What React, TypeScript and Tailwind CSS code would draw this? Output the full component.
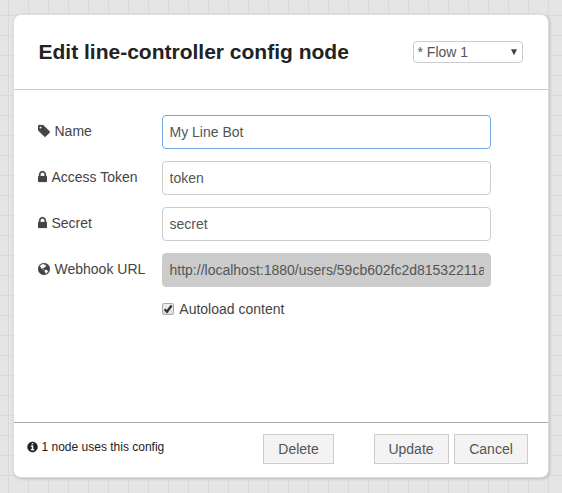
import React from "react";

function Glyph({ d, units, className }: { d: string; units: number; className: string }) {
  return (
    <svg viewBox={`0 0 ${units} 1792`} className={`shrink-0 ${className}`} fill="currentColor" stroke="currentColor" strokeWidth="30" fillRule="evenodd" aria-hidden="true">
      <path d={d} />
    </svg>
  );
}

const TAG =
  "M448 448q0-53-37.5-90.5t-90.5-37.5-90.5 37.5-37.5 90.5 37.5 90.5 90.5 37.5 90.5-37.5 37.5-90.5zm1067 576q0 53-37 90l-491 492q-39 37-91 37-53 0-90-37l-715-716q-38-37-64.5-101t-26.5-117v-416q0-52 38-90t90-38h416q53 0 117 26.5t102 64.5l715 714q37 39 37 91z";
const LOCK =
  "M320 768h512v-192q0-106-75-181t-181-75-181 75-75 181v192zm832 96v576q0 40-28 68t-68 28h-960q-40 0-68-28t-28-68v-576q0-40 28-68t68-28h32v-192q0-184 132-316t316-132 316 132 132 316v192h32q40 0 68 28t28 68z";
const INFO =
  "M1024 1376v-160q0-14-9-23t-23-9h-96v-512q0-14-9-23t-23-9h-320q-14 0-23 9t-9 23v160q0 14 9 23t23 9h96v320h-96q-14 0-23 9t-9 23v160q0 14 9 23t23 9h448q14 0 23-9t9-23zm-128-896v-160q0-14-9-23t-23-9h-192q-14 0-23 9t-9 23v160q0 14 9 23t23 9h192q14 0 23-9t9-23zm640 416q0 209-103 385.5t-279.5 279.5-385.5 103-385.5-103-279.5-279.5-103-385.5 103-385.5 279.5-279.5 385.5-103 385.5 103 279.5 279.5 103 385.5z";
const GLOBE =
  "M768 128a768 768 0 1 0 0 1536a768 768 0 1 0 0-1536z M270 480L400 340L580 250L720 230L820 300L760 380L900 330L1010 400L1080 530L970 590L900 670L810 740L740 820L690 780L600 800L590 880L680 900L710 1000L800 1030L740 1040L620 960L480 880L400 760L330 650L240 620z M880 1010L990 970L1110 1020L1200 1090L1310 1130L1260 1270L1130 1410L960 1490L910 1500L930 1330L830 1200L820 1090z";

function Row({ icon, label, children }: { icon: React.ReactNode; label: string; children: React.ReactNode }) {
  return (
    <div className="flex h-[34px] text-[14px] leading-5">
      <label className="flex w-[124px] shrink-0 items-center gap-[4.5px] pb-[2px] whitespace-nowrap text-[#444]">
        {icon}
        <span>{label}</span>
      </label>
      {children}
    </div>
  );
}

const field = "h-[34px] w-[329px] rounded border px-[6.5px] text-[14px] leading-5 text-[#555] outline-none";
const button = "h-[30px] border border-[#ccc] bg-[#f3f3f3] text-[14px] leading-5 text-[#555]";

export default function App() {
  return (
    <main className="h-[493px] w-[562px] overflow-hidden bg-[#e5e5e5] bg-[linear-gradient(to_right,#d9d9d9_1px,transparent_1px),linear-gradient(to_bottom,#d9d9d9_1px,transparent_1px)] bg-size-[20px_20px] bg-position-[8px_15px] pt-[14px] pl-[13px] font-['Liberation_Sans',Arial,sans-serif]">
      <section className="flex h-[464px] w-[536px] flex-col rounded-[8px] border border-[#ddd] bg-white shadow-[1px_1px_3px_#bbb]">
        <header className="flex h-[75px] items-center justify-between border-b border-[#ccc] pr-[25px] pl-[24.5px]">
          <h1 className="text-[21px] leading-6 font-bold text-[#222]">Edit line-controller config node</h1>
          <button className="flex h-[22px] w-[110px] items-center justify-between rounded border border-[#ccc] bg-white pr-[5px] pl-[3.5px] text-[14px] leading-5 text-[#555]">
            <span>* Flow 1</span>
            <svg viewBox="0 0 6 6" className="mb-px h-[6px] w-[6px]" fill="#444" aria-hidden="true">
              <path d="M0 .3H6L3.2 6H2.8z" />
            </svg>
          </button>
        </header>
        <div className="flex h-[332px] flex-col gap-3 pt-[25px] pl-6">
          <Row label="Name" icon={<Glyph d={TAG} units={1536} className="h-[14px] w-[12px]" />}>
            <input className={`${field} border-[#72a7e6]`} defaultValue="My Line Bot" />
          </Row>
          <Row label="Access Token" icon={<Glyph d={LOCK} units={1152} className="h-[14px] w-[9px]" />}>
            <input className={`${field} border-[#ccc]`} defaultValue="token" />
          </Row>
          <Row label="Secret" icon={<Glyph d={LOCK} units={1152} className="h-[14px] w-[9px]" />}>
            <input className={`${field} border-[#ccc]`} defaultValue="secret" />
          </Row>
          <Row label="Webhook URL" icon={<Glyph d={GLOBE} units={1536} className="h-[14px] w-[12px]" />}>
            <input readOnly className={`${field} border-[#ccc] bg-[#ccc]`} defaultValue="http://localhost:1880/users/59cb602fc2d81532211a" />
          </Row>
          <label className="flex h-5 items-center gap-[5.3px] pl-[124px] text-[14px] leading-5 text-[#444]">
            <span className="flex h-[12px] w-[12px] items-center justify-center rounded-[2px] border border-[#aaa] bg-linear-to-b from-[#eee] to-[#ddd]">
              <svg viewBox="0 0 10 10" className="h-[10px] w-[10px] shrink-0" fill="none" stroke="#333" strokeWidth="2.3" aria-hidden="true">
                <path d="M1.6 5.2L4 7.7L8.6 1.5" />
              </svg>
            </span>
            <span>Autoload content</span>
          </label>
        </div>
        <footer className="flex h-[55px] items-start border-t border-[#aaa] pt-[11px] pr-5 pl-[13px]">
          <div className="flex h-[26px] w-[236px] items-center gap-[3.5px] text-[12px] leading-5 whitespace-nowrap text-[#222]">
            <Glyph d={INFO} units={1536} className="h-[12px] w-[11px]" />
            <span>1 node uses this config</span>
          </div>
          <button className={`${button} w-[71px]`}>Delete</button>
          <button className={`${button} ml-[40px] w-[75px] pr-px`}>Update</button>
          <button className={`${button} ml-[5px] w-[74px]`}>Cancel</button>
        </footer>
      </section>
    </main>
  );
}
